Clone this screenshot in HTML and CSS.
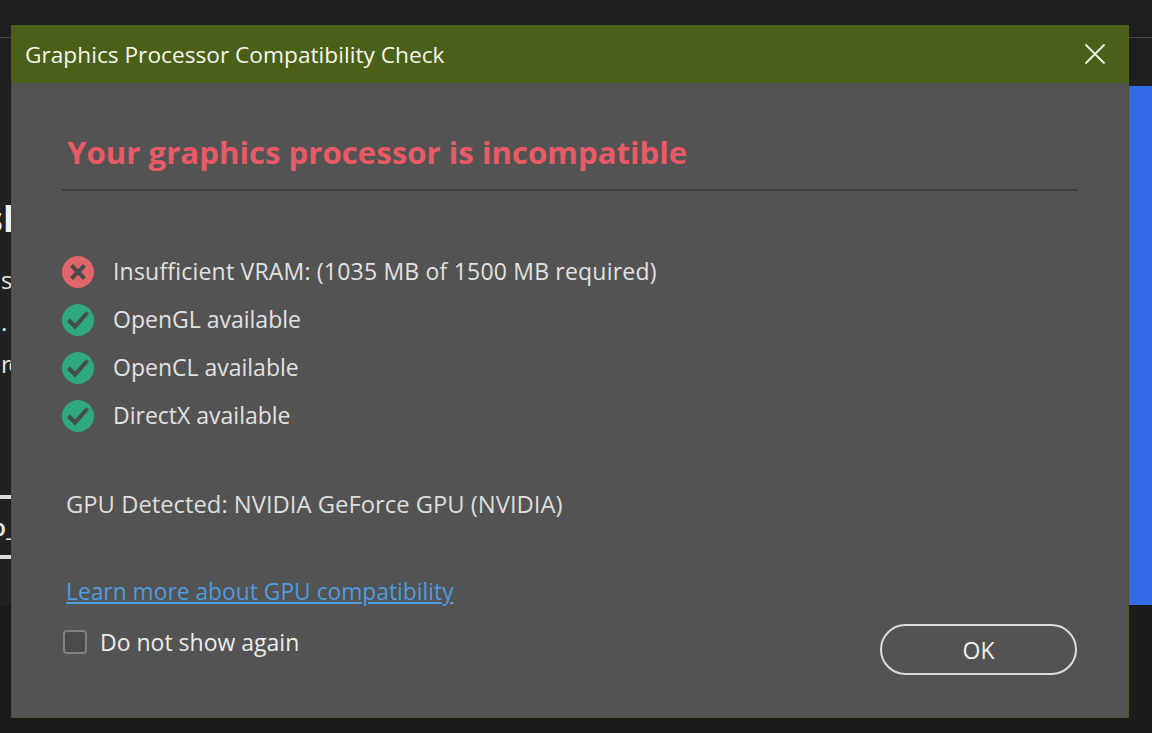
FILE: index.html
```html
<!DOCTYPE html>
<html lang="en">
<head>
  <meta charset="UTF-8">
  <title>Graphics Processor Compatibility Check</title>
  <link rel="stylesheet" href="styles.css">
</head>
<body>

  <!-- page behind the dialog -->
  <div class="top-bar"></div>
  <div class="sub-bar"></div>
  <div class="hero">
    <div class="hero-copy">
      <div class="hero-title">sh</div>
      <div class="hero-line">s</div>
      <div class="hero-line">.</div>
      <div class="hero-line">re</div>
      <div class="hero-btn">p_</div>
    </div>
    <div class="hero-blue"></div>
  </div>

  <div class="dialog">
    <div class="dialog-title">
      <span>Graphics Processor Compatibility Check</span>
      <svg class="close-icon" width="22" height="22" viewBox="0 0 22 22">
        <path d="M1.5 1.5L20.5 20.5M20.5 1.5L1.5 20.5" stroke="#f2f4e8" stroke-width="1.8" fill="none"/>
      </svg>
    </div>

    <div class="dialog-body">
      <h1 class="error-head">Your graphics processor is incompatible</h1>

      <ul class="check-list">
        <li class="check-row check-row-wide">
          <svg class="status-icon" width="32" height="32" viewBox="0 0 32 32">
            <circle cx="16" cy="16" r="16" fill="#e1646b"/>
            <path d="M9.5 9.5L22.5 22.5M22.5 9.5L9.5 22.5" stroke="#4a4a4a" stroke-width="4" fill="none"/>
          </svg>
          <span>Insufficient VRAM: (1035 MB of 1500 MB required)</span>
        </li>
        <li class="check-row">
          <svg class="status-icon" width="32" height="32" viewBox="0 0 32 32">
            <circle cx="16" cy="16" r="16" fill="#2fa87f"/>
            <path d="M6.5 16L13 22.5L25.5 8.5" stroke="#4a4a4a" stroke-width="4" fill="none"/>
          </svg>
          <span>OpenGL available</span>
        </li>
        <li class="check-row">
          <svg class="status-icon" width="32" height="32" viewBox="0 0 32 32">
            <circle cx="16" cy="16" r="16" fill="#2fa87f"/>
            <path d="M6.5 16L13 22.5L25.5 8.5" stroke="#4a4a4a" stroke-width="4" fill="none"/>
          </svg>
          <span>OpenCL available</span>
        </li>
        <li class="check-row">
          <svg class="status-icon" width="32" height="32" viewBox="0 0 32 32">
            <circle cx="16" cy="16" r="16" fill="#2fa87f"/>
            <path d="M6.5 16L13 22.5L25.5 8.5" stroke="#4a4a4a" stroke-width="4" fill="none"/>
          </svg>
          <span>DirectX available</span>
        </li>
      </ul>

      <div class="gpu-line">GPU Detected: NVIDIA GeForce GPU (NVIDIA)</div>

      <a class="gpu-link" href="#">Learn more about GPU compatibility</a>

      <div class="dialog-foot">
        <label class="no-show">
          <span class="check-box"></span>
          Do not show again
        </label>
        <button class="ok-btn">OK</button>
      </div>
    </div>
  </div>

</body>
</html>
```

FILE: styles.css
```css
body {
  font-family: "Open Sans", "Noto Sans", sans-serif;
  margin: 0;
  padding: 0;
  height: 733px;
  overflow: hidden;
  background: #1b1b1b;
}

.top-bar {
  height: 37px;
  background: #1e1e1e;
  border-bottom: 1px solid #474747;
}

.sub-bar {
  height: 48px;
  background: #1f1f1f;
}

.hero {
  height: 519px;
  display: flex;
  justify-content: space-between;
  background: #212121;
}

.hero-copy {
  width: 12px;
  overflow: hidden;
  color: #e6e6e6;
  white-space: nowrap;
}

.hero-title {
  margin: 113px 0 0 -15px;
  font-size: 36px;
  line-height: 40px;
  font-weight: 700;
  color: #f2f2f2;
}

.hero-line {
  margin: 0 0 0 1px;
  font-size: 24px;
  line-height: 42px;
  letter-spacing: -2.5px;
}

.hero-line:nth-child(2) {
  margin-top: 20px;
}

.hero-btn {
  margin: 110px 0 0 -9px;
  width: 60px;
  height: 64px;
  box-sizing: border-box;
  border: solid #dcdcdc;
  border-width: 4px 0;
  font-size: 24px;
  line-height: 56px;
  font-weight: 600;
}

.hero-blue {
  width: 23px;
  background: #316be8;
}

.dialog {
  position: absolute;
  left: 11px;
  top: 25px;
  width: 1118px;
  height: 693px;
  background: #535353;
  box-shadow: 0 0 0 1px #4d5330 inset;
  display: flex;
  flex-direction: column;
}

.dialog-title {
  height: 58px;
  flex: none;
  background: #4a5f17;
  color: #f5f7ee;
  font-size: 22.7px;
  padding: 0 23px 0 14px;
  display: flex;
  align-items: center;
  justify-content: space-between;
}

.dialog-body {
  flex: 1;
  padding: 0 51px;
  display: flex;
  flex-direction: column;
}

.error-head {
  margin: 0;
  height: 108px;
  box-sizing: border-box;
  padding: 46px 0 0 5px;
  font-size: 31.2px;
  line-height: 46px;
  font-weight: 700;
  color: #e95a67;
  border-bottom: 2px solid #404040;
}

.check-list {
  margin: 57px 0 0;
  padding: 0;
  list-style: none;
}

.check-row {
  height: 48px;
  display: flex;
  align-items: center;
  gap: 19px;
  font-size: 23px;
  color: #e2e2e2;
}

.check-row span {
  margin-top: -2px;
}

.check-row-wide {
  letter-spacing: 0.2px;
}

.gpu-line {
  margin: 47px 0 0 4px;
  font-size: 23.8px;
  line-height: 34px;
  color: #dedede;
}

.gpu-link {
  margin: 54px 0 0 4px;
  font-size: 22.8px;
  line-height: 34px;
  color: #4f9bde;
  align-self: flex-start;
}

.dialog-foot {
  display: flex;
  justify-content: space-between;
  align-items: flex-start;
  margin-right: 1px;
}

.no-show {
  margin-top: 16px;
  display: flex;
  align-items: center;
  gap: 13px;
  font-size: 23px;
  line-height: 34px;
  color: #ececec;
}

.check-box {
  width: 20px;
  height: 20px;
  margin-left: 1px;
  border: 2px solid #808080;
  border-radius: 4px;
  background: #4a4a4a;
}

.ok-btn {
  width: 197px;
  height: 51px;
  margin-top: 15px;
  border: 2px solid #dcdcdc;
  border-radius: 26px;
  background: transparent;
  color: #f0f0f0;
  font-family: inherit;
  font-size: 23px;
}
```
